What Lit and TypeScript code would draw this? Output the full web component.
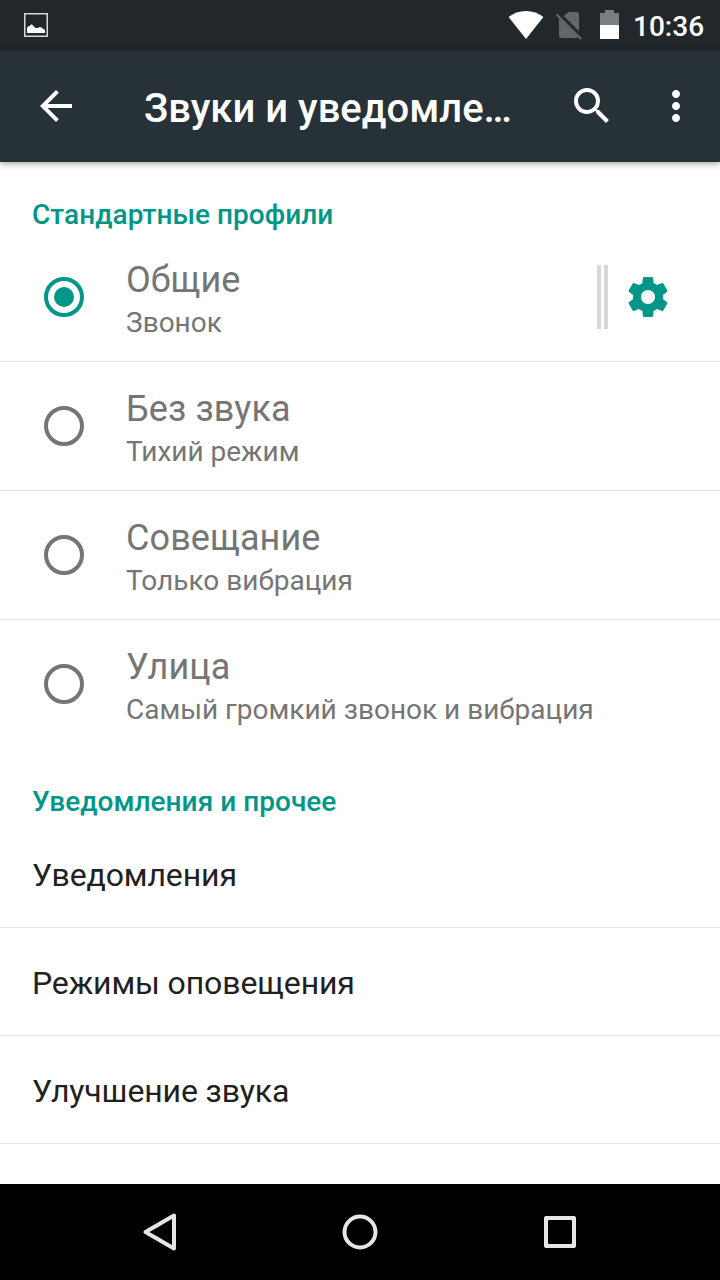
import { LitElement, html, css, svg, nothing } from 'lit';
import { customElement, state } from 'lit/decorators.js';

interface Profile {
  title: string;
  summary: string;
}

const PROFILES: Profile[] = [
  { title: 'Общие', summary: 'Звонок' },
  { title: 'Без звука', summary: 'Тихий режим' },
  { title: 'Совещание', summary: 'Только вибрация' },
  { title: 'Улица', summary: 'Самый громкий звонок и вибрация' },
];

const LINKS = ['Уведомления', 'Режимы оповещения', 'Улучшение звука'];

const icon = (d: string) => html`<svg class="icon" viewBox="0 0 24 24"><path fill="currentColor" d=${d}></path></svg>`;

const BACK = 'M20 11H7.83l5.59-5.59L12 4l-8 8 8 8 1.41-1.41L7.83 13H20v-2z';
const SEARCH =
  'M15.5 14h-.79l-.28-.27A6.471 6.471 0 0 0 16 9.5 6.5 6.5 0 1 0 9.5 16c1.61 0 3.09-.59 4.23-1.57l.27.28v.79l5 4.99L20.49 19l-4.99-5zm-6 0C7.01 14 5 11.99 5 9.5S7.01 5 9.5 5 14 7.01 14 9.5 11.99 14 9.5 14z';
const MORE =
  'M12 8c1.1 0 2-.9 2-2s-.9-2-2-2-2 .9-2 2 .9 2 2 2zm0 2c-1.1 0-2 .9-2 2s.9 2 2 2 2-.9 2-2-.9-2-2-2zm0 6c-1.1 0-2 .9-2 2s.9 2 2 2 2-.9 2-2-.9-2-2-2z';
const GEAR =
  'M19.43 12.98c.04-.32.07-.64.07-.98s-.03-.66-.07-.98l2.11-1.65c.19-.15.24-.42.12-.64l-2-3.46c-.12-.22-.39-.3-.61-.22l-2.49 1c-.52-.4-1.08-.73-1.69-.98l-.38-2.65C14.46 2.18 14.25 2 14 2h-4c-.25 0-.46.18-.49.42l-.38 2.65c-.61.25-1.17.59-1.69.98l-2.49-1c-.23-.09-.49 0-.61.22l-2 3.46c-.13.22-.07.49.12.64l2.11 1.65c-.04.32-.07.65-.07.98s.03.66.07.98l-2.11 1.65c-.19.15-.24.42-.12.64l2 3.46c.12.22.39.3.61.22l2.49-1c.52.4 1.08.73 1.69.98l.38 2.65c.03.24.24.42.49.42h4c.25 0 .46-.18.49-.42l.38-2.65c.61-.25 1.17-.59 1.69-.98l2.49 1c.23.09.49 0 .61-.22l2-3.46c.12-.22.07-.49-.12-.64l-2.11-1.65zM12 15.5c-1.93 0-3.5-1.57-3.5-3.5s1.57-3.5 3.5-3.5 3.5 1.57 3.5 3.5-1.57 3.5-3.5 3.5z';

@customElement('app-root')
export class AppRoot extends LitElement {
  @state() private selected = 0;

  static styles = css`
    :host {
      display: flex;
      flex-direction: column;
      width: 720px;
      height: 1280px;
      overflow: hidden;
      background: #fff;
      font-family: Roboto, 'Noto Sans', sans-serif;
    }
    * {
      box-sizing: border-box;
    }
    svg {
      display: block;
      flex: none;
    }
    .icon {
      width: 48px;
      height: 48px;
    }
    .status {
      flex: none;
      display: flex;
      align-items: flex-start;
      height: 50px;
      padding: 0 16px 0 24px;
      background: #22272b;
      color: #fff;
    }
    .spacer {
      flex: 1;
    }
    .clock {
      font-size: 28px;
      font-weight: 500;
      line-height: 34px;
      padding-top: 10px;
      width: 71px;
      white-space: nowrap;
    }
    .toolbar {
      flex: none;
      display: flex;
      align-items: center;
      height: 112px;
      padding: 0 20px 0 32px;
      background: #263238;
      color: #fff;
      box-shadow: 0 1px 7px rgba(0, 0, 0, 0.42);
    }
    .title {
      flex: 1;
      margin-left: 64px;
      padding-top: 5px;
      font-size: 40px;
      line-height: 48px;
      font-weight: 500;
      white-space: nowrap;
    }
    .more {
      margin-left: 36px;
    }
    .list {
      flex: 1;
      min-height: 0;
      overflow: hidden;
    }
    .header {
      height: 71px;
      padding: 36px 32px 0;
      color: #009688;
      font-size: 28px;
      line-height: 34px;
      font-weight: 500;
      letter-spacing: 0.03px;
    }
    .profile {
      display: flex;
      align-items: center;
      height: 129px;
      padding: 0 48px 1px 40px;
      color: #757575;
    }
    .profile.line,
    .link {
      border-bottom: 1px solid #e0e0e0;
      padding-bottom: 0;
    }
    .texts {
      flex: 1;
      margin-left: 38px;
      padding-top: 5px;
    }
    .name {
      font-size: 36px;
      line-height: 44px;
      letter-spacing: 0.1px;
    }
    .summary {
      font-size: 28px;
      line-height: 34px;
      padding-top: 4px;
      height: 40px;
    }
    .checked,
    .gear {
      color: #009688;
    }
    .grip {
      width: 11px;
      height: 64px;
      margin-right: 16px;
      border: solid #d8d8d8;
      border-width: 0 4px;
    }
    .link {
      display: flex;
      align-items: center;
      height: 108px;
      padding: 2px 32px 0;
      color: #212121;
      font-size: 32px;
      line-height: 38px;
      letter-spacing: -0.12px;
    }
    .nav {
      flex: none;
      height: 96px;
      background: #000;
    }
  `;

  private renderStatus() {
    return html`<div class="status">
      <svg width="24" height="50" viewBox="24 0 24 50">
        <rect x="24.750" y="13.750" width="22.500" height="22.500" fill="none" stroke="#d6d7d7" stroke-width="1.500"></rect>
        <path fill="#fff" d="M27 33v-5l1-1.500 1.500-.5 1.500-1.500h1l2 2 1.500 1.500h2l1.500-.8h2l1.500 1.300 1.500.5 1 1.500V33z"></path>
      </svg>
      <span class="spacer"></span>
      <svg width="125" height="50" viewBox="508 0 125 50">
        <path fill="#fff" d="M526 39 508.600 17Q516 11 526 11T543.400 17z"></path>
        <g fill="#636769">
          <path d="M568.500 12H576.500Q579 12 579 14.500V31.200L563.700 16z"></path>
          <path d="M559 18.200V35.500Q559 38 561.500 38H576.500L578 37z"></path>
          <path d="M557.300 13.700 581.800 38.200 580.400 39.700 555.800 15.200z"></path>
        </g>
        <path fill="#7b7e80" d="M605 10h9v3h5v12h-19V13h5z"></path>
        <path fill="#fff" d="M600 25h19v14h-19z"></path>
      </svg>
      <span class="clock">10:36</span>
    </div>`;
  }

  private renderRadio(on: boolean) {
    return html`<svg class="icon ${on ? 'checked' : ''}" viewBox="0 0 48 48">
      <circle cx="24" cy="24" r="18" fill="none" stroke="currentColor" stroke-width="4"></circle>
      ${on ? svg`<circle cx="24" cy="24" r="10" fill="currentColor"></circle>` : nothing}
    </svg>`;
  }

  private renderProfile(p: Profile, i: number) {
    const on = i === this.selected;
    return html`<div class="profile ${i < PROFILES.length - 1 ? 'line' : ''}" @click=${() => (this.selected = i)}>
      ${this.renderRadio(on)}
      <div class="texts">
        <div class="name">${p.title}</div>
        <div class="summary">${p.summary}</div>
      </div>
      ${on ? html`<div class="grip"></div><div class="gear">${icon(GEAR)}</div>` : nothing}
    </div>`;
  }

  render() {
    return html`
      ${this.renderStatus()}
      <div class="toolbar">
        ${icon(BACK)}
        <div class="title">Звуки и уведомле…</div>
        ${icon(SEARCH)}
        <div class="more">${icon(MORE)}</div>
      </div>
      <div class="list">
        <div class="header">Стандартные профили</div>
        ${PROFILES.map((p, i) => this.renderProfile(p, i))}
        <div class="header">Уведомления и прочее</div>
        ${LINKS.map((t) => html`<div class="link">${t}</div>`)}
      </div>
      <div class="nav">
        <svg width="720" height="96" viewBox="0 0 720 96" fill="none" stroke="#e6e6e6" stroke-width="4" stroke-linejoin="round">
          <path d="M174 31.500V64.500L145.500 48z"></path>
          <circle cx="360" cy="48" r="15.500"></circle>
          <rect x="546" y="34" width="28" height="28"></rect>
        </svg>
      </div>
    `;
  }
}
